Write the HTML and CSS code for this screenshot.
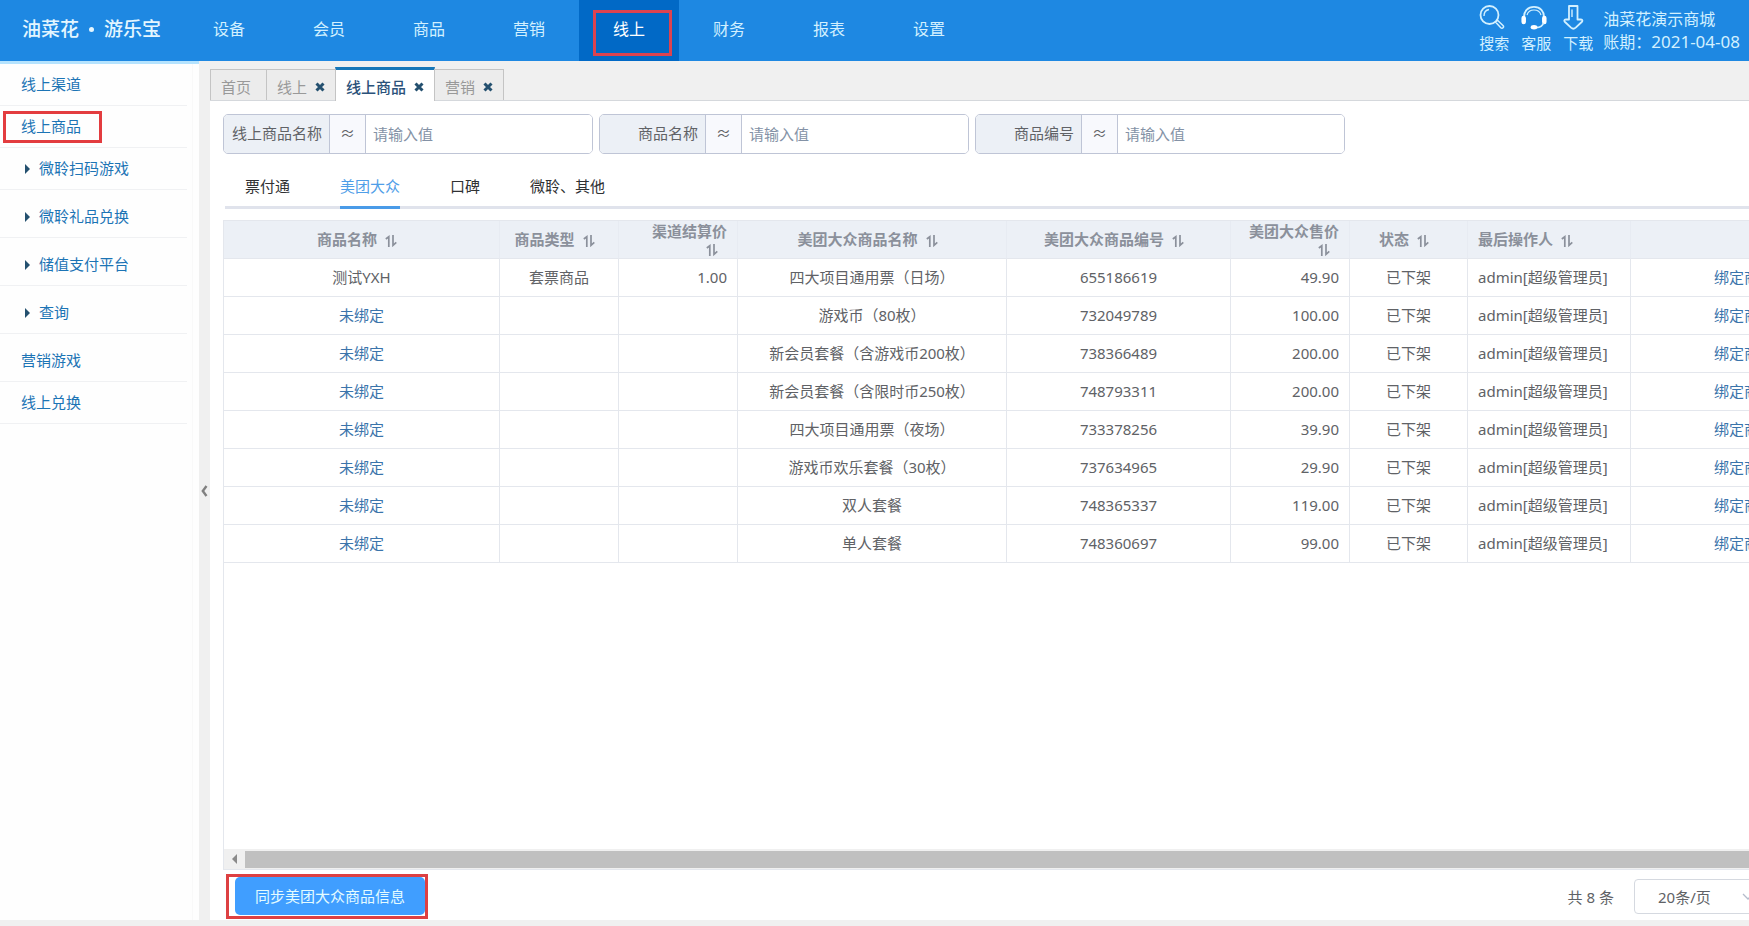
FILE: index.html
```html
<!DOCTYPE html>
<html lang="zh-CN">
<head>
<meta charset="utf-8">
<title>线上商品</title>
<link rel="stylesheet" href="styles.css">
</head>
<body>
<svg class="defs" aria-hidden="true">
  <symbol id="sort" viewBox="0 0 12 12"><path d="M.8 4 3.800 1.800V12M8 0v10.300l3.300-3" fill="none" stroke="currentColor" stroke-width="1.700"/></symbol>
  <symbol id="close" viewBox="0 0 10 10"><path d="M1.500 1.500 8.500 8.500M8.500 1.500 1.500 8.500" fill="none" stroke="currentColor" stroke-width="3"/></symbol>
</svg>
<header class="topbar">
  <div class="logo"><span>油菜花</span><i class="logo-dot"></i><span>游乐宝</span></div>
  <nav class="nav">
    <a href="#">设备</a><a href="#">会员</a><a href="#">商品</a><a href="#">营销</a><a href="#" class="current">线上</a><a href="#">财务</a><a href="#">报表</a><a href="#">设置</a>
  </nav>
  <div class="tools">
    <a href="#" class="tool"><svg width="26" height="25" viewBox="0 0 26 25" fill="none" stroke="currentColor"><circle cx="10.500" cy="10" r="9" stroke-width="1.800"/><path d="M5 11c0-4 2-6 5-6.500" stroke-width="1.400"/><path d="m16.500 17 2-1.800 5.500 5.300c1.500 1.500-.7 3.800-2.200 2.300z" stroke-width="1.500"/></svg>搜索</a>
    <a href="#" class="tool"><svg width="26" height="25" viewBox="0 0 26 25" fill="none" stroke="currentColor"><path d="M3 13C2.500 6 7 1.800 13 1.800S23.500 6 23 13" stroke-width="1.800"/><path d="M6 10C7 6.500 9.500 5 13 5s6 1.500 7 5" stroke-width="1.200"/><path d="M2.700 13v4M23.300 13v4" stroke="#fff" stroke-width="4.500" stroke-linecap="round"/><path d="M22.500 18c-1 3-4 4.500-7 4.500" stroke-width="1.800"/><ellipse cx="13" cy="22.300" rx="3.300" ry="2.200" fill="#fff" stroke="none"/></svg>客服</a>
    <a href="#" class="tool"><svg width="21" height="25" viewBox="0 0 21 25" fill="none" stroke="currentColor" stroke-width="1.800" stroke-linejoin="round"><path d="M6 1h8.500v13.500h3.500c1.700 0 1.700 1.500.7 2.500l-6 5.700c-1.700 1.500-3 1.500-4.700 0L2 17c-1-1-1-2.500.8-2.500H6z"/><path d="M9 4.500V12" stroke-width="1.400"/></svg>下载</a>
    <div class="account"><span>油菜花演示商城</span><span>账期：<time>2021-04-08</time></span></div>
  </div>
</header>
<div class="body">
  <aside class="sidebar">
    <ul class="menu">
      <li><a href="#">线上渠道</a></li>
      <li><a href="#" class="marked">线上商品</a></li>
      <li class="group"><a href="#">微聆扫码游戏</a></li>
      <li class="group spaced"><a href="#">微聆礼品兑换</a></li>
      <li class="group spaced"><a href="#">储值支付平台</a></li>
      <li class="group spaced"><a href="#">查询</a></li>
      <li class="spaced"><a href="#">营销游戏</a></li>
      <li><a href="#">线上兑换</a></li>
    </ul>
  </aside>
  <button class="collapse" type="button" aria-label="收起菜单"><svg width="7" height="12" viewBox="0 0 7 12"><path d="M5.500 1 1.800 6l3.700 5" fill="none" stroke="currentColor" stroke-width="2.400"/></svg></button>
  <main class="main">
    <div class="tabs">
      <div class="tab"><a href="#">首页</a></div>
      <div class="tab"><a href="#">线上</a><button type="button" aria-label="关闭"><svg width="10" height="10"><use href="#close"/></svg></button></div>
      <div class="tab open"><a href="#">线上商品</a><button type="button" aria-label="关闭"><svg width="10" height="10"><use href="#close"/></svg></button></div>
      <div class="tab"><a href="#">营销</a><button type="button" aria-label="关闭"><svg width="10" height="10"><use href="#close"/></svg></button></div>
    </div>
    <div class="panel">
      <form class="filters">
        <div class="filter"><label for="f1">线上商品名称</label><span class="op">≈</span><input id="f1" type="text" placeholder="请输入值"></div>
        <div class="filter"><label for="f2">商品名称</label><span class="op">≈</span><input id="f2" type="text" placeholder="请输入值"></div>
        <div class="filter"><label for="f3">商品编号</label><span class="op">≈</span><input id="f3" type="text" placeholder="请输入值"></div>
      </form>
      <div class="channels">
        <a href="#">票付通</a><a href="#" class="chosen">美团大众</a><a href="#">口碑</a><a href="#">微聆、其他</a>
      </div>
      <div class="grid">
        <div class="grid-view">
          <table>
            <colgroup><col class="c-name"><col class="c-s"><col class="c-s"><col class="c-mt"><col class="c-no"><col class="c-s"><col class="c-state"><col class="c-user"><col class="c-act"></colgroup>
            <thead>
              <tr>
                <th>商品名称<svg class="sort"><use href="#sort"/></svg></th>
                <th>商品类型<svg class="sort"><use href="#sort"/></svg></th>
                <th class="num">渠道结算价<svg class="sort"><use href="#sort"/></svg></th>
                <th>美团大众商品名称<svg class="sort"><use href="#sort"/></svg></th>
                <th>美团大众商品编号<svg class="sort"><use href="#sort"/></svg></th>
                <th class="num">美团大众售价<svg class="sort"><use href="#sort"/></svg></th>
                <th>状态<svg class="sort"><use href="#sort"/></svg></th>
                <th class="left">最后操作人<svg class="sort"><use href="#sort"/></svg></th>
                <th></th>
              </tr>
            </thead>
            <tbody>
              <tr><td>测试YXH</td><td>套票商品</td><td class="num">1.00</td><td>四大项目通用票（日场）</td><td>655186619</td><td class="num">49.90</td><td>已下架</td><td class="left">admin[超级管理员]</td><td><a href="#">绑定商品</a></td></tr>
              <tr><td><a href="#">未绑定</a></td><td></td><td></td><td>游戏币（80枚）</td><td>732049789</td><td class="num">100.00</td><td>已下架</td><td class="left">admin[超级管理员]</td><td><a href="#">绑定商品</a></td></tr>
              <tr><td><a href="#">未绑定</a></td><td></td><td></td><td>新会员套餐（含游戏币200枚）</td><td>738366489</td><td class="num">200.00</td><td>已下架</td><td class="left">admin[超级管理员]</td><td><a href="#">绑定商品</a></td></tr>
              <tr><td><a href="#">未绑定</a></td><td></td><td></td><td>新会员套餐（含限时币250枚）</td><td>748793311</td><td class="num">200.00</td><td>已下架</td><td class="left">admin[超级管理员]</td><td><a href="#">绑定商品</a></td></tr>
              <tr><td><a href="#">未绑定</a></td><td></td><td></td><td>四大项目通用票（夜场）</td><td>733378256</td><td class="num">39.90</td><td>已下架</td><td class="left">admin[超级管理员]</td><td><a href="#">绑定商品</a></td></tr>
              <tr><td><a href="#">未绑定</a></td><td></td><td></td><td>游戏币欢乐套餐（30枚）</td><td>737634965</td><td class="num">29.90</td><td>已下架</td><td class="left">admin[超级管理员]</td><td><a href="#">绑定商品</a></td></tr>
              <tr><td><a href="#">未绑定</a></td><td></td><td></td><td>双人套餐</td><td>748365337</td><td class="num">119.00</td><td>已下架</td><td class="left">admin[超级管理员]</td><td><a href="#">绑定商品</a></td></tr>
              <tr><td><a href="#">未绑定</a></td><td></td><td></td><td>单人套餐</td><td>748360697</td><td class="num">99.00</td><td>已下架</td><td class="left">admin[超级管理员]</td><td><a href="#">绑定商品</a></td></tr>
            </tbody>
          </table>
        </div>
        <div class="hscroll"><span class="hscroll-arrow"></span><span class="hscroll-thumb"></span></div>
      </div>
      <footer class="footer">
        <div class="sync-mark"><button class="sync" type="button">同步美团大众商品信息</button></div>
        <div class="pager">
          <span>共 8 条</span>
          <div class="size"><select aria-label="每页条数"><option>20条/页</option></select><svg width="12" height="8" viewBox="0 0 12 8"><path d="m1 1 5 5 5-5" fill="none" stroke="currentColor" stroke-width="1.300"/></svg></div>
        </div>
      </footer>
    </div>
  </main>
</div>
</body>
</html>
```

FILE: styles.css
```css
* { box-sizing: border-box; }
body {
  margin: 0;
  height: 100vh;
  display: flex;
  flex-direction: column;
  overflow: hidden;
  background: #f0f0f0;
  color: #606266;
  font: 15px/18px "Noto Sans", "Noto Sans CJK SC", sans-serif;
}
a { text-decoration: none; color: inherit; }
button, input, select { font: inherit; color: inherit; }
.defs { display: none; }

/* top bar */
.topbar {
  flex: none;
  height: 61px;
  display: flex;
  background: #1e88e2;
  color: #d2f0ff;
}
.logo {
  width: 179px;
  padding: 0 0 3px 22px;
  display: flex;
  align-items: center;
  gap: 10px;
  font-size: 19px;
  font-weight: 500;
  color: #e4f6ff;
}
.logo-dot { width: 5px; height: 5px; border-radius: 50%; background: currentColor; }
.nav { display: flex; font-size: 16px; }
.nav a {
  position: relative;
  width: 100px;
  line-height: 59px;
  text-align: center;
}
.nav .current { height: 61px; background: #0169c6; color: #fff; }
.nav .current::after {
  content: "";
  position: absolute;
  inset: 10px 7px 5px 14px;
  border: 3px solid #dd4350;
}
.tools { margin-left: auto; display: flex; padding: 5px 9px 0 0; }
.tool { width: 42px; display: flex; flex-direction: column; gap: 4px; white-space: nowrap; }
.tool:nth-child(3) { width: 40px; }
.account {
  display: flex;
  flex-direction: column;
  gap: 1px;
  padding-top: 3px;
  font-size: 16px;
  line-height: 22px;
  white-space: nowrap;
}
.account time { font-size: 17px; }

/* side menu */
.body { flex: 1; min-height: 0; display: flex; padding-bottom: 6px; }
.sidebar {
  flex: none;
  width: 199px;
  border-top: 3px solid #b5e3fe;
  background: #fefefe;
}
.menu {
  list-style: none;
  margin: 0 6px 0 0;
  padding: 0 5px 0 0;
  height: 100%;
  border-right: 1px solid #f9f9f9;
  color: #1c74b5;
}
.menu li { border-bottom: 1px solid #f0f1f3; padding-left: 21px; line-height: 41px; }
.menu .group { padding-left: 25px; }
.menu .spaced { padding-top: 6px; }
.menu a { position: relative; }
.menu .group a::before {
  content: "";
  display: inline-block;
  margin-right: 9px;
  border: 5px solid transparent;
  border-left-color: #24506f;
  border-right-width: 0;
}
.menu .marked::after {
  content: "";
  position: absolute;
  inset: -5px -21px -7px -18px;
  border: 3px solid #e33c3f;
}
.collapse {
  flex: none;
  width: 11px;
  padding: 0;
  border: 0;
  background: #f0f0f0;
  color: #808080;
  display: flex;
  align-items: center;
  justify-content: center;
}

/* page tabs */
.main { flex: 1; min-width: 0; display: flex; flex-direction: column; }
.tabs {
  flex: none;
  height: 40px;
  padding-top: 6px;
  display: flex;
  align-items: flex-end;
  border-bottom: 1px solid #d5d8dc;
  color: #999;
}
.tab {
  height: 31px;
  display: flex;
  align-items: center;
  gap: 8px;
  padding: 3px 10px 0;
  border: 1px solid #c4c4c4;
  border-bottom: 0;
  background: #ececec;
  margin-right: -1px;
}
.tab:first-child { padding: 3px 15px 0 10px; }
.tab.open {
  height: 34px;
  margin-bottom: -1px;
  padding: 2px 10px 0;
  border-top: 3px solid #1677b8;
  background: #fff;
  color: #2b527a;
  font-weight: 500;
}
.tab button { display: flex; padding: 0; border: 0; background: none; color: #24506f; }

/* filters */
.panel { flex: 1; min-height: 0; display: flex; flex-direction: column; background: #fff; padding: 13px 0 0 13px; }
.filters { display: flex; gap: 6px; }
.filter {
  width: 370px;
  height: 40px;
  display: flex;
  border: 1px solid #bfc5d6;
  border-radius: 5px;
  overflow: hidden;
  line-height: 37px;
}
.filter label { width: 105px; padding-right: 7px; text-align: right; background: #ecf0f6; }
.op { width: 37px; text-align: center; background: #f8f9fd; border: solid #bfc5d6; border-width: 0 1px; }
.filter input { flex: 1; min-width: 0; border: 0; padding: 0 7px; outline: 0; }
.filter input::placeholder { color: #8492a6; opacity: 1; }

.channels {
  flex: none;
  margin: 11px 0 0 2px;
  padding-left: 20px;
  display: flex;
  gap: 50px;
  color: #303133;
  border-bottom: 3px solid #e0e3ec;
}
.channels a { padding: 2px 0 1px; line-height: 38px; margin-bottom: -3px; border-bottom: 3px solid transparent; }
.channels .chosen { color: #4f9ee8; border-color: #4a9be8; }

/* table */
.grid {
  flex: 1;
  min-height: 0;
  margin-top: 11px;
  display: flex;
  flex-direction: column;
  border: 1px solid #e4e7ed;
  border-right: 0;
}
.grid-view { flex: 1; min-height: 0; overflow: hidden; }
table { table-layout: fixed; width: 1634px; border-collapse: separate; border-spacing: 0; }
.c-name { width: 276px; }
.c-s { width: 119px; }
.c-state { width: 118px; }
.c-mt { width: 269px; }
.c-no { width: 224px; }
.c-user { width: 163px; }
.c-act { width: 227px; }
th, td { padding: 0 10px 2px; text-align: center; border: solid #e4e7ed; border-width: 0 1px 1px 0; }
th { height: 38px; padding-bottom: 0; background: #ecf0f6; color: #8b909b; font-weight: 700; line-height: 17px; border-right-color: #e7ebf2; }
td { height: 38px; white-space: nowrap; }
td a { color: #3a74ab; }
.num { text-align: right; }
.left { text-align: left; }
.sort { width: 12px; height: 12px; margin: 0 9px 0 8px; vertical-align: -2px; }

.hscroll { flex: none; display: flex; align-items: center; height: 20px; background: #f0f0f0; }
.hscroll-arrow { margin: 0 8px; border: 5px solid transparent; border-right-color: #8a8a8a; border-left-width: 0; }
.hscroll-thumb { flex: 1; height: 17px; background: #c0c0c0; }

/* footer */
.footer { flex: none; display: flex; justify-content: space-between; align-items: center; padding: 4px 0 1px 3px; }
.sync-mark { padding: 0 0 1px 6px; border: 3px solid #dd4042; }
.sync {
  display: block;
  height: 38px;
  padding: 0 20px;
  border: 0;
  border-radius: 5px;
  background: #409eff;
  color: #e3fbff;
}
.pager { display: flex; align-items: center; gap: 20px; margin-right: -16px; }
.size { position: relative; }
.size select {
  appearance: none;
  display: block;
  width: 131px;
  height: 35px;
  padding: 0 23px;
  border: 1px solid #d5d9e0;
  border-radius: 4px;
  background: #fff;
}
.size svg { position: absolute; right: 11px; top: 14px; color: #b4bccc; }
```
